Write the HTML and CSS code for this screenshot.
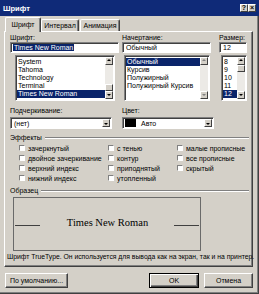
FILE: index.html
```html
<!DOCTYPE html>
<html lang="ru">
<head>
<meta charset="utf-8">
<title>Шрифт</title>
<link rel="stylesheet" href="styles.css">
</head>
<body>
<div class="dialog">
  <div class="titlebar">
    <span class="title">Шрифт</span>
    <div class="tb-btns"><span class="tbb">?</span><span class="tbb">×</span></div>
  </div>
  <div class="tabs">
    <div class="tab active w1">Шрифт</div>
    <div class="tab w2">Интервал</div>
    <div class="tab w3">Анимация</div>
  </div>
  <div class="panel">
    <div class="toprow">
      <div class="col c1">
        <div class="lbl">Шрифт:</div>
        <div class="input"><span class="hl">Times New Roman</span></div>
        <div class="list l1">
          <div class="items">
            <div class="item">System</div>
            <div class="item">Tahoma</div>
            <div class="item">Technology</div>
            <div class="item">Terminal</div>
            <div class="item sel">Times New Roman</div>
          </div>
          <div class="sb">
            <div class="sbb up"></div>
            <div class="track"><div class="thumb th-bottom"></div></div>
            <div class="sbb down"></div>
          </div>
        </div>
      </div>
      <div class="col c2">
        <div class="lbl">Начертание:</div>
        <div class="input"><span class="txt">Обычный</span></div>
        <div class="list l2">
          <div class="items">
            <div class="item sel">Обычный</div>
            <div class="item">Курсив</div>
            <div class="item">Полужирный</div>
            <div class="item">Полужирный Курсив</div>
          </div>
          <div class="sb">
            <div class="sbb up dis"></div>
            <div class="track plain"></div>
            <div class="sbb down dis"></div>
          </div>
        </div>
      </div>
      <div class="col c3">
        <div class="lbl">Размер:</div>
        <div class="input"><span class="txt">12</span></div>
        <div class="list l3">
          <div class="items">
            <div class="item">8</div>
            <div class="item">9</div>
            <div class="item">10</div>
            <div class="item">11</div>
            <div class="item sel">12</div>
          </div>
          <div class="sb">
            <div class="sbb up"></div>
            <div class="track"><div class="thumb th-top"></div></div>
            <div class="sbb down"></div>
          </div>
        </div>
      </div>
    </div>
    <div class="row2">
      <div class="col cu">
        <div class="lbl">Подчеркивание:</div>
        <div class="combo"><span class="ctxt">(нет)</span><span class="cbtn"></span></div>
      </div>
      <div class="col cc">
        <div class="lbl">Цвет:</div>
        <div class="combo"><span class="swatch"></span><span class="ctxt">Авто</span><span class="cbtn"></span></div>
      </div>
    </div>
    <div class="grp">Эффекты</div>
    <div class="effects">
      <div class="chk"><span class="box"></span>зачеркнутый</div>
      <div class="chk"><span class="box"></span>с тенью</div>
      <div class="chk"><span class="box"></span>малые прописные</div>
      <div class="chk"><span class="box"></span>двойное зачеркивание</div>
      <div class="chk"><span class="box"></span>контур</div>
      <div class="chk"><span class="box"></span>все прописные</div>
      <div class="chk"><span class="box"></span>верхний индекс</div>
      <div class="chk"><span class="box"></span>приподнятый</div>
      <div class="chk"><span class="box"></span>скрытый</div>
      <div class="chk"><span class="box"></span>нижний индекс</div>
      <div class="chk"><span class="box"></span>утопленный</div>
    </div>
    <div class="grp">Образец</div>
    <div class="sample">
      <div class="srow">
        <span class="bl"></span>
        <span class="stext">Times New Roman</span>
        <span class="bl"></span>
      </div>
    </div>
    <div class="note">Шрифт TrueType. Он используется для вывода как на экран, так и на принтер.</div>
  </div>
  <div class="btns">
    <div class="btn bdef">По умолчанию...</div>
    <div class="btn bok"><span>OK</span></div>
    <div class="btn bcancel">Отмена</div>
  </div>
</div>
</body>
</html>
```

FILE: styles.css
```css
* { box-sizing: border-box; }
body {
  margin: 0;
  background: #d4d0c8;
  font-family: "Liberation Sans", Arial, sans-serif;
  font-size: 7px;
  color: #000;
}
.dialog {
  width: 259px;
  height: 294px;
  background: #d4d0c8;
  box-shadow: inset -1px -1px #404040, inset -2px -2px #808080;
  display: flex;
  flex-direction: column;
}
.titlebar {
  height: 16px;
  background: #0f2a78;
  display: flex;
  align-items: center;
  justify-content: space-between;
  padding: 0 3px 0 3px;
  flex: none;
}
.title { color: #fff; font-weight: bold; font-size: 7.5px; }
.tb-btns { display: flex; }
.tbb {
  width: 8px;
  height: 8px;
  background: #d4d0c8;
  border: 1px solid;
  border-color: #fff #404040 #404040 #fff;
  font-size: 7px;
  line-height: 6px;
  text-align: center;
  font-weight: bold;
}
.tabs {
  display: flex;
  align-items: flex-end;
  height: 14px;
  margin-top: 1px;
  padding-left: 5px;
  position: relative;
  z-index: 1;
  flex: none;
}
.tab {
  height: 12px;
  border: 1px solid;
  border-color: #fff #404040 transparent #fff;
  border-bottom: none;
  border-radius: 2px 2px 0 0;
  text-align: center;
  line-height: 11px;
  background: #d4d0c8;
  box-shadow: inset -1px 0 #808080;
}
.tab.active { height: 15px; margin-bottom: -1px; line-height: 13px; }
.w1 { width: 36px; }
.w2 { width: 38px; margin-left: 0; }
.w3 { width: 40px; margin-left: 1px; }
.panel {
  margin-left: 4px;
  width: 249px;
  height: 236px;
  flex: none;
  border: 1px solid;
  border-color: #fff #404040 #404040 #fff;
  box-shadow: inset -1px -1px #808080;
  padding-left: 2px;
}
.toprow { display: flex; margin-top: 1px; margin-left: 3px; }
.col { display: flex; flex-direction: column; }
.c1 { width: 109px; }
.c2 { width: 89px; margin-left: 3px; }
.c3 { width: 28px; margin-left: 8px; }
.lbl { height: 9px; line-height: 9px; white-space: nowrap; }
.input {
  height: 11px;
  background: #fff;
  border: 1px solid;
  border-color: #808080 #fff #fff #808080;
  box-shadow: inset 1px 1px #404040;
  line-height: 9px;
  padding-left: 2px;
  white-space: nowrap;
  overflow: hidden;
}
.hl { background: #0a246a; color: #fff; padding: 0 1px; }
.txt { padding-left: 1px; }
.list {
  margin-top: 2px;
  height: 46px;
  background: #fff;
  border: 1px solid;
  border-color: #808080 #fff #fff #808080;
  box-shadow: inset 1px 1px #404040;
  display: flex;
  padding: 1px 1px 1px 1px;
}
.l1 { margin-left: 5px; margin-right: 4px; }
.l2 { margin-left: 2px; margin-right: 1px; }
.l3 { margin-left: 2px; }
.items { flex: 1; padding-top: 1px; overflow: hidden; min-width: 0; }
.item { height: 8px; line-height: 8px; padding-left: 1px; white-space: nowrap; }
.item.sel { background: #0a246a; color: #fff; }
.sb {
  width: 8px;
  display: flex;
  flex-direction: column;
  background: #eceae6;
}
.sbb {
  height: 8px;
  background: #d4d0c8;
  border: 1px solid;
  border-color: #fff #404040 #404040 #fff;
  position: relative;
}
.sbb::after {
  content: "";
  position: absolute;
  left: 1px;
  top: 1px;
  border-left: 2px solid transparent;
  border-right: 2px solid transparent;
}
.sbb.up::after { border-bottom: 2px solid #000; }
.sbb.down::after { border-top: 2px solid #000; top: 2px; }
.sbb.dis::after { border-bottom-color: #808080; border-top-color: #808080; }
.track { flex: 1; display: flex; flex-direction: column; }
.track.plain { background: #eceae6; }
.thumb {
  height: 7px;
  background: #d4d0c8;
  border: 1px solid;
  border-color: #fff #404040 #404040 #fff;
}
.th-bottom { margin-top: auto; }
.row2 { display: flex; margin-top: 5px; margin-left: 3px; }
.cu { width: 102px; }
.cc { width: 92px; margin-left: 10px; }
.combo {
  margin-top: 2px;
  height: 12px;
  background: #fff;
  border: 1px solid;
  border-color: #808080 #fff #fff #808080;
  box-shadow: inset 1px 1px #404040;
  display: flex;
  align-items: center;
  padding: 1px;
}
.ctxt { flex: 1; padding-left: 2px; line-height: 9px; }
.swatch { width: 11px; height: 8px; background: #000; margin-left: 1px; margin-right: 3px; }
.cbtn {
  width: 8px;
  height: 100%;
  background: #d4d0c8;
  border: 1px solid;
  border-color: #fff #404040 #404040 #fff;
  position: relative;
}
.cbtn::after {
  content: "";
  position: absolute;
  left: 1px;
  top: 3px;
  border-left: 2px solid transparent;
  border-right: 2px solid transparent;
  border-top: 2px solid #000;
}
.grp {
  display: flex;
  align-items: center;
  gap: 3px;
  height: 9px;
  line-height: 9px;
  margin-left: 3px;
  margin-right: 3px;
  margin-top: 4px;
}
.grp::after {
  content: "";
  flex: 1;
  border-top: 1px solid #808080;
  border-bottom: 1px solid #fff;
}
.effects {
  display: grid;
  grid-template-columns: 89px 69px auto;
  grid-auto-rows: 10px;
  margin-top: 1px;
  margin-left: 12px;
}
.chk { display: flex; align-items: center; white-space: nowrap; }
.box {
  width: 6px;
  height: 6px;
  background: #fff;
  border: 1px solid;
  border-color: #808080 #fff #fff #808080;
  margin-right: 3px;
  flex: none;
}
.effects + .grp { margin-top: 3px; }
.sample {
  margin-top: 2px;
  margin-left: 6px;
  width: 188px;
  height: 54px;
  border: 1px solid #6a6a6a;
  padding-top: 19px;
}
.srow {
  display: flex;
  align-items: baseline;
  justify-content: center;
  line-height: 12px;
}
.bl { width: 25px; height: 1px; background: #404040; }
.stext {
  font-family: "Liberation Serif", "Times New Roman", serif;
  font-size: 10.5px;
  margin: 0 26px 0 27px;
}
.note { margin-top: 2px; line-height: 8px; white-space: nowrap; font-size: 6.8px; }
.btns { display: flex; margin-top: 6px; padding: 0 6px 0 5px; }
.btn {
  height: 15px;
  background: #d4d0c8;
  border: 1px solid;
  border-color: #fff #404040 #404040 #fff;
  box-shadow: inset -1px -1px #808080;
  display: flex;
  align-items: center;
  justify-content: center;
  white-space: nowrap;
}
.bdef { width: 63px; }
.bok {
  width: 50px;
  margin-left: auto;
  border: 1px solid #000;
  box-shadow: inset 1px 1px #fff, inset -1px -1px #404040, inset -2px -2px #808080;
}
.bcancel { width: 49px; margin-left: 5px; }
```
